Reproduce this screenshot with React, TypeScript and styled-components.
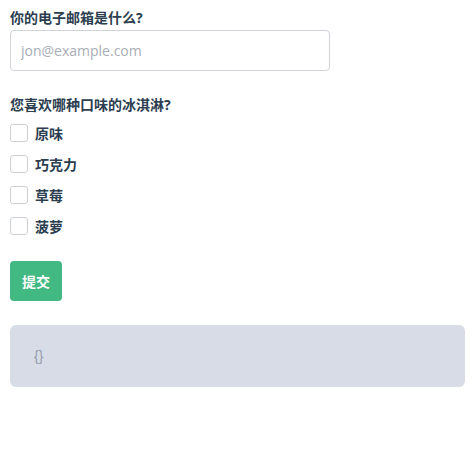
import React from 'react';
import styled, { createGlobalStyle } from 'styled-components';

const GlobalStyle = createGlobalStyle`
  html, body {
    margin: 0;
    padding: 0;
    background: #fff;
  }
  body {
    font-family: "Noto Sans", "Noto Sans CJK SC", sans-serif;
    color: #2c3e50;
  }
`;

const Page = styled.form`
  display: flex;
  flex-direction: column;
  padding: 8px 4px 0 10px;
`;

const Question = styled.div`
  font-size: 14px;
  font-weight: bold;
  line-height: 20px;
  margin-bottom: 2px;
`;

const Field = styled.div<{ $gap?: number }>`
  display: flex;
  flex-direction: column;
  margin-bottom: ${props => props.$gap ?? 0}px;
`;

const TextInput = styled.input`
  box-sizing: border-box;
  width: 320px;
  height: 41px;
  padding: 0 10px;
  border: 1px solid #d0d4d9;
  border-radius: 4px;
  font-family: "Open Sans", sans-serif;
  font-size: 14px;
  color: #2c3e50;
  outline: none;

  &::placeholder {
    color: #a8aeb5;
  }
`;

const Options = styled.div`
  display: flex;
  flex-direction: column;
  gap: 13px;
  margin-top: 7px;
`;

const Option = styled.label`
  display: flex;
  align-items: center;
  gap: 7px;
  height: 18px;
  font-size: 14px;
  font-weight: bold;
`;

const Box = styled.input`
  appearance: none;
  margin: 0;
  width: 18px;
  height: 18px;
  border: 1px solid #ccd0d5;
  border-radius: 3px;
  background: #fff;
`;

const SubmitButton = styled.button`
  align-self: flex-start;
  width: 52px;
  height: 40px;
  border: none;
  border-radius: 4px;
  background: #42b983;
  color: #fff;
  font-family: "Noto Sans CJK SC", sans-serif;
  font-size: 14px;
  font-weight: bold;
  margin-bottom: 24px;
`;

const Output = styled.pre`
  box-sizing: border-box;
  margin: 0;
  height: 62px;
  padding: 0 24px;
  display: flex;
  align-items: center;
  background: #d7dce6;
  border-radius: 6px;
  font-family: "Liberation Sans", sans-serif;
  font-size: 14px;
  color: #959cab;
`;

const flavours = ['原味', '巧克力', '草莓', '菠萝'];

const App = () => (
  <>
    <GlobalStyle />
    <Page onSubmit={e => e.preventDefault()}>
      <Field $gap={24}>
        <Question>你的电子邮箱是什么?</Question>
        <TextInput type="email" placeholder="jon@example.com" />
      </Field>
      <Field $gap={26}>
        <Question>您喜欢哪种口味的冰淇淋?</Question>
        <Options>
          {flavours.map(f => (
            <Option key={f}>
              <Box type="checkbox" />
              {f}
            </Option>
          ))}
        </Options>
      </Field>
      <SubmitButton type="submit">提交</SubmitButton>
      <Output>{'{}'}</Output>
    </Page>
  </>
);

export default App;
